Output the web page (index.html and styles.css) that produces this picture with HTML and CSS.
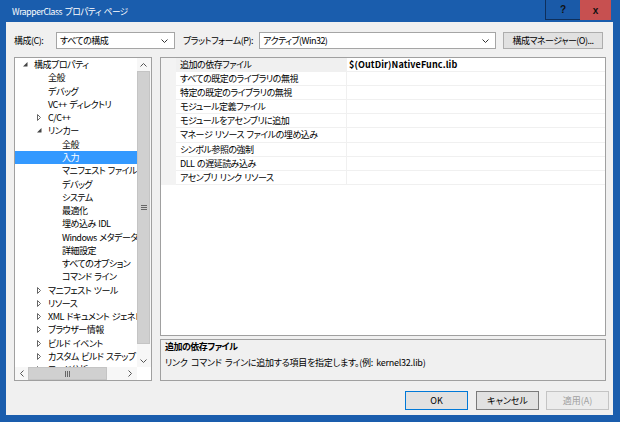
FILE: index.html
```html
<!DOCTYPE html>
<html lang="ja">
<head>
<meta charset="utf-8">
<title>WrapperClass プロパティ ページ</title>
<link rel="stylesheet" href="styles.css">
</head>
<body>
<div class="window">
  <div class="titlebar">
    <div class="title">WrapperClass プロパティ ページ</div>
    <div class="tb-btn help">?</div>
    <div class="tb-btn close">x</div>
  </div>
  <div class="client">
    <div class="toolbar">
      <span class="lbl lbl1">構成(C):</span>
      <div class="combo c1"><span class="combo-text">すべての構成</span><svg class="chev" width="7" height="4" viewBox="0 0 7 4"><path d="M0.5 0.5 L3.5 3.5 L6.5 0.5" fill="none" stroke="#333" stroke-width="1"/></svg></div>
      <span class="lbl lbl2">プラットフォーム(P):</span>
      <div class="combo c2"><span class="combo-text">アクティブ(Win32)</span><svg class="chev" width="7" height="4" viewBox="0 0 7 4"><path d="M0.5 0.5 L3.5 3.5 L6.5 0.5" fill="none" stroke="#333" stroke-width="1"/></svg></div>
      <div class="btn mgr">構成マネージャー(O)...</div>
    </div>
    <div class="main">
      <div class="tree">
        <div class="tree-body">
          <div class="tree-list">
            <div class="ti l0"><span class="arr"><svg width="5" height="5" viewBox="0 0 5 5"><path d="M4.5 0 V4.5 H0 Z" fill="#444"/></svg></span>構成プロパティ</div>
            <div class="ti l1"><span class="arr"></span>全般</div>
            <div class="ti l1"><span class="arr"></span>デバッグ</div>
            <div class="ti l1"><span class="arr"></span>VC++ ディレクトリ</div>
            <div class="ti l1"><span class="arr"><svg width="4" height="7" viewBox="0 0 4 7"><path d="M0.5 0.5 L3.5 3.5 L0.5 6.5 Z" fill="none" stroke="#666" stroke-width="1"/></svg></span>C/C++</div>
            <div class="ti l1"><span class="arr"><svg width="5" height="5" viewBox="0 0 5 5"><path d="M4.5 0 V4.5 H0 Z" fill="#444"/></svg></span>リンカー</div>
            <div class="ti l2"><span class="arr"></span>全般</div>
            <div class="ti l2 sel"><span class="arr"></span>入力</div>
            <div class="ti l2"><span class="arr"></span>マニフェスト ファイル</div>
            <div class="ti l2"><span class="arr"></span>デバッグ</div>
            <div class="ti l2"><span class="arr"></span>システム</div>
            <div class="ti l2"><span class="arr"></span>最適化</div>
            <div class="ti l2"><span class="arr"></span>埋め込み IDL</div>
            <div class="ti l2"><span class="arr"></span>Windows メタデータ</div>
            <div class="ti l2"><span class="arr"></span>詳細設定</div>
            <div class="ti l2"><span class="arr"></span>すべてのオプション</div>
            <div class="ti l2"><span class="arr"></span>コマンド ライン</div>
            <div class="ti l1"><span class="arr"><svg width="4" height="7" viewBox="0 0 4 7"><path d="M0.5 0.5 L3.5 3.5 L0.5 6.5 Z" fill="none" stroke="#666" stroke-width="1"/></svg></span>マニフェスト ツール</div>
            <div class="ti l1"><span class="arr"><svg width="4" height="7" viewBox="0 0 4 7"><path d="M0.5 0.5 L3.5 3.5 L0.5 6.5 Z" fill="none" stroke="#666" stroke-width="1"/></svg></span>リソース</div>
            <div class="ti l1"><span class="arr"><svg width="4" height="7" viewBox="0 0 4 7"><path d="M0.5 0.5 L3.5 3.5 L0.5 6.5 Z" fill="none" stroke="#666" stroke-width="1"/></svg></span>XML ドキュメント ジェネレーター</div>
            <div class="ti l1"><span class="arr"><svg width="4" height="7" viewBox="0 0 4 7"><path d="M0.5 0.5 L3.5 3.5 L0.5 6.5 Z" fill="none" stroke="#666" stroke-width="1"/></svg></span>ブラウザー情報</div>
            <div class="ti l1"><span class="arr"><svg width="4" height="7" viewBox="0 0 4 7"><path d="M0.5 0.5 L3.5 3.5 L0.5 6.5 Z" fill="none" stroke="#666" stroke-width="1"/></svg></span>ビルド イベント</div>
            <div class="ti l1"><span class="arr"><svg width="4" height="7" viewBox="0 0 4 7"><path d="M0.5 0.5 L3.5 3.5 L0.5 6.5 Z" fill="none" stroke="#666" stroke-width="1"/></svg></span>カスタム ビルド ステップ</div>
            <div class="ti l1"><span class="arr"><svg width="4" height="7" viewBox="0 0 4 7"><path d="M0.5 0.5 L3.5 3.5 L0.5 6.5 Z" fill="none" stroke="#666" stroke-width="1"/></svg></span>コード分析</div>
          </div>
          <div class="vscroll">
            <div class="sb-btn"><svg width="7" height="4" viewBox="0 0 7 4"><path d="M0.5 3.5 L3.5 0.5 L6.5 3.5" fill="none" stroke="#555" stroke-width="1"/></svg></div>
            <div class="vthumb"><svg width="6" height="5" viewBox="0 0 6 5"><path d="M0 0.5 H6 M0 2.5 H6 M0 4.5 H6" stroke="#666" stroke-width="1"/></svg></div>
            <div class="sb-track"></div>
            <div class="sb-btn down"><svg width="7" height="4" viewBox="0 0 7 4"><path d="M0.5 0.5 L3.5 3.5 L6.5 0.5" fill="none" stroke="#555" stroke-width="1"/></svg></div>
          </div>
        </div>
        <div class="hrow">
          <div class="hscroll">
            <div class="sb-btn h"><svg width="4" height="7" viewBox="0 0 4 7"><path d="M3.5 0.5 L0.5 3.5 L3.5 6.5" fill="none" stroke="#555" stroke-width="1"/></svg></div>
            <div class="hthumb"><svg width="5" height="6" viewBox="0 0 5 6"><path d="M0.5 0 V6 M2.5 0 V6 M4.5 0 V6" stroke="#666" stroke-width="1"/></svg></div>
            <div class="sb-track"></div>
            <div class="sb-btn h right"><svg width="4" height="7" viewBox="0 0 4 7"><path d="M0.5 0.5 L3.5 3.5 L0.5 6.5" fill="none" stroke="#555" stroke-width="1"/></svg></div>
          </div>
          <div class="corner"></div>
        </div>
      </div>
      <div class="right">
        <div class="grid">
          <div class="row sel"><div class="gut"></div><div class="name">追加の依存ファイル</div><div class="val strong">$(OutDir)NativeFunc.lib</div></div>
          <div class="row"><div class="gut"></div><div class="name">すべての既定のライブラリの無視</div><div class="val"></div></div>
          <div class="row"><div class="gut"></div><div class="name">特定の既定のライブラリの無視</div><div class="val"></div></div>
          <div class="row"><div class="gut"></div><div class="name">モジュール定義ファイル</div><div class="val"></div></div>
          <div class="row"><div class="gut"></div><div class="name">モジュールをアセンブリに追加</div><div class="val"></div></div>
          <div class="row"><div class="gut"></div><div class="name">マネージ リソース ファイルの埋め込み</div><div class="val"></div></div>
          <div class="row"><div class="gut"></div><div class="name">シンボル参照の強制</div><div class="val"></div></div>
          <div class="row"><div class="gut"></div><div class="name">DLL の遅延読み込み</div><div class="val"></div></div>
          <div class="row"><div class="gut"></div><div class="name">アセンブリ リンク リソース</div><div class="val"></div></div>
        </div>
        <div class="desc">
          <div class="desc-title">追加の依存ファイル</div>
          <div class="desc-text">リンク コマンド ラインに追加する項目を指定します。(例: kernel32.lib)</div>
        </div>
      </div>
    </div>
    <div class="buttons">
      <div class="btn ok">OK</div>
      <div class="btn cancel">キャンセル</div>
      <div class="btn apply">適用(A)</div>
    </div>
  </div>
</div>
</body>
</html>
```

FILE: styles.css
```css
* { box-sizing: border-box; }
html, body { margin: 0; padding: 0; }
body {
  width: 620px;
  height: 422px;
  overflow: hidden;
  font-family: "Noto Sans CJK JP", "Noto Sans", sans-serif;
  font-size: 9px;
  letter-spacing: -0.5px;
  word-spacing: 1px;
  color: #000;
  font-feature-settings: "palt";
}
.window {
  width: 620px;
  height: 422px;
  background: #1a5dad;
  display: flex;
  flex-direction: column;
  padding: 0 7px 7px 6px;
}
.titlebar {
  height: 22px;
  flex: none;
  display: flex;
  align-items: flex-start;
}
.title {
  flex: 1;
  color: #fff;
  font-size: 8.6px;
  letter-spacing: -0.4px;
  line-height: 23px;
  padding-left: 6px;
}
.tb-btn {
  height: 20px;
  display: flex;
  align-items: center;
  justify-content: center;
  font-family: "Liberation Sans", sans-serif;
  font-weight: bold;
  font-size: 10px;
  letter-spacing: 0;
  color: #111;
}
.help {
  width: 35px;
  background: #1a5aa8;
  border-left: 1px solid #0e2f5c;
  border-bottom: 1px solid #0e2f5c;
}
.close {
  width: 31px;
  margin-right: 2px;
  background: #c75050;
}
.client {
  flex: 1;
  background: #f0f0f0;
  display: flex;
  flex-direction: column;
  padding: 10px 7px 5px 8px;
}
.toolbar {
  height: 17px;
  flex: none;
  display: flex;
  align-items: center;
}
.lbl { white-space: nowrap; }
.lbl1 { width: 42px; }
.lbl2 { width: 76px; margin-left: 8px; }
.combo {
  height: 17px;
  background: #fff;
  border: 1px solid #a5a5a5;
  display: flex;
  align-items: center;
  padding: 0 6px 0 3px;
}
.combo-text { flex: 1; white-space: nowrap; }
.chev { flex: none; }
.c1 { width: 119px; }
.c2 { width: 237px; }
.btn {
  height: 17px;
  display: flex;
  align-items: center;
  justify-content: center;
  background: #e1e1e1;
  border: 1px solid #adadad;
  white-space: nowrap;
}
.mgr { width: 100px; margin-left: 7px; }
.main {
  height: 324px;
  flex: none;
  margin-top: 8px;
  display: flex;
  gap: 8px;
}
.tree {
  width: 138px;
  border: 1px solid #a0a0a0;
  background: #fff;
  display: flex;
  flex-direction: column;
}
.tree-body {
  flex: 1;
  display: flex;
  min-height: 0;
}
.tree-list {
  flex: 1;
  overflow: hidden;
}
.ti {
  height: 13.27px;
  display: flex;
  align-items: center;
  white-space: nowrap;
}
.arr {
  width: 11px;
  flex: none;
  display: flex;
  align-items: center;
}
.l0 { padding-left: 8px; }
.l1 { padding-left: 22px; }
.l2 { padding-left: 36px; }
.ti.sel { background: #3399ff; color: #fff; }
.vscroll {
  width: 14px;
  display: flex;
  flex-direction: column;
  background: #f7f7f7;
  padding-right: 1px;
}
.sb-btn {
  height: 13px;
  flex: none;
  display: flex;
  align-items: center;
  justify-content: center;
}
.sb-btn.down { height: 12px; }
.vthumb {
  height: 273px;
  flex: none;
  background: #d0d0d0;
  border: 1px solid #c4c4c4;
  display: flex;
  align-items: center;
  justify-content: center;
}
.sb-track { flex: 1; }
.hrow {
  height: 13px;
  flex: none;
  display: flex;
}
.hscroll {
  flex: 1;
  display: flex;
  background: #f7f7f7;
}
.sb-btn.h { width: 13px; height: 13px; }
.sb-btn.h.right { width: 12px; }
.hthumb {
  width: 79px;
  flex: none;
  background: #d0d0d0;
  border: 1px solid #c4c4c4;
  display: flex;
  align-items: center;
  justify-content: center;
}
.corner { width: 14px; background: #fff; }
.right {
  flex: 1;
  display: flex;
  flex-direction: column;
  gap: 3px;
}
.grid {
  height: 279px;
  flex: none;
  background: #fff;
  border: 1px solid #a0a0a0;
}
.row {
  height: 14.1px;
  display: flex;
}
.gut {
  width: 15px;
  flex: none;
  background: #f3f3f3;
}
.name {
  width: 170px;
  flex: none;
  padding-left: 4px;
  line-height: 13px;
  white-space: nowrap;
  border-bottom: 1px solid #f0f0f0;
}
.row.sel .name { background: #f0f0f0; }
.val {
  flex: 1;
  padding-left: 2px;
  line-height: 13px;
  white-space: nowrap;
  border-left: 1px solid #f0f0f0;
  border-bottom: 1px solid #f0f0f0;
}
.strong { font-weight: bold; letter-spacing: 0.1px; }
.desc {
  flex: 1;
  background: #f0f0f0;
  border: 1px solid #a0a0a0;
  padding: 0 4px;
}
.desc-title { font-weight: bold; line-height: 13px; margin-bottom: 3px; }
.desc-text { line-height: 13px; letter-spacing: -0.25px; word-spacing: 1.5px; }
.buttons {
  margin-top: 10px;
  margin-right: -3px;
  display: flex;
  justify-content: flex-end;
  gap: 7px;
}
.buttons .btn { width: 63px; height: 19px; letter-spacing: 0; }
.ok { border-color: #0078d7; margin-right: 1px; }
.cancel { border-color: #7a7a7a; }
.apply { color: #a0a0a0; background: #ececec; border-color: #c4c4c4; }
```
